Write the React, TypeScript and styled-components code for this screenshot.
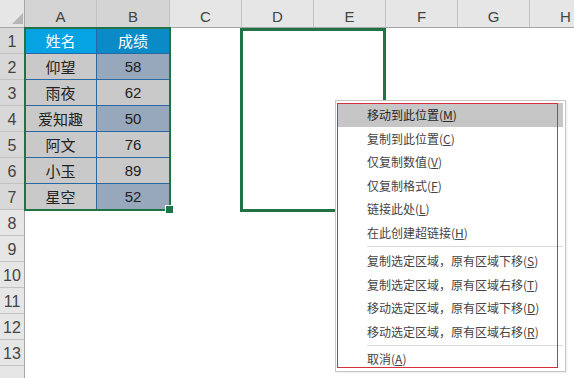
import React, { FC } from "react";
import styled, { createGlobalStyle, css } from "styled-components";

const GlobalStyle = createGlobalStyle`
  html, body {
    margin: 0;
    padding: 0;
    background: #ffffff;
  }
  body {
    font-family: "Liberation Sans", "Noto Sans CJK SC", sans-serif;
  }
`;

const COLS = ["A", "B", "C", "D", "E", "F", "G", "H"];
const ROWS = 14;
// only the top of row 14 is on screen, its number falls below the edge
const LABELED_ROWS = 13;

const Sheet = styled.div`
  position: relative;
  width: 574px;
  height: 378px;
  overflow: hidden;
  display: grid;
  grid-template-columns: 25px 72px 73px 72px 72px 72px 72px 72px 72px;
  grid-template-rows: 28px repeat(${ROWS}, 26px);
  background: #ffffff;
`;

const Corner = styled.div`
  background: #e6e6e6;
  border-right: 1px solid #a6a6a6;
  border-bottom: 1px solid #a6a6a6;
  box-sizing: border-box;
  display: flex;
  align-items: flex-end;
  justify-content: flex-end;
  padding: 0 1px 3px 0;
`;

const ColHeader = styled.div<{ $selected?: boolean }>`
  background: ${(p) => (p.$selected ? "#d4d4d4" : "#e6e6e6")};
  border-right: 1px solid #c2c2c2;
  border-bottom: 1px solid #a6a6a6;
  box-sizing: border-box;
  display: flex;
  align-items: flex-end;
  justify-content: center;
  padding-bottom: 2px;
  font-size: 15px;
  color: #444444;
`;

const RowHeader = styled.div<{ $selected?: boolean }>`
  background: ${(p) => (p.$selected ? "#d8d8d8" : "#e6e6e6")};
  border-right: 1px solid #a6a6a6;
  border-bottom: 1px solid #c2c2c2;
  box-sizing: border-box;
  display: flex;
  align-items: flex-end;
  justify-content: center;
  padding-bottom: 2px;
  font-size: 16px;
  color: #444444;
`;

type CellKind = "head1" | "head2" | "name" | "dark" | "light" | "empty";

const kindStyles: Record<CellKind, ReturnType<typeof css>> = {
  head1: css`
    background: #05a2e4;
    color: #ffffff;
  `,
  head2: css`
    background: #0a8bc7;
    color: #ffffff;
  `,
  name: css`
    background: #c9c9c9;
    color: #222222;
  `,
  dark: css`
    background: #97a8bc;
    color: #222222;
  `,
  light: css`
    background: #c9c9c9;
    color: #222222;
  `,
  empty: css`
    background: transparent;
  `,
};

const Cell = styled.div<{ $kind: CellKind }>`
  box-sizing: border-box;
  display: flex;
  align-items: center;
  justify-content: center;
  font-family: "Liberation Sans", "Noto Sans CJK SC", sans-serif;
  font-size: 15px;
  ${(p) => kindStyles[p.$kind]}
  ${(p) =>
    p.$kind !== "empty" &&
    css`
      border-right: 1px solid #2b67a3;
      border-bottom: 1px solid #2b67a3;
    `}
`;

const Selection = styled.div`
  position: absolute;
  left: 24px;
  top: 27px;
  width: 147px;
  height: 184px;
  border: 2px solid #217346;
  box-sizing: border-box;
  pointer-events: none;
`;

const FillHandle = styled.div`
  position: absolute;
  right: -5px;
  bottom: -5px;
  width: 7px;
  height: 7px;
  background: #217346;
  border: 1px solid #ffffff;
`;

const DragOutline = styled.div`
  position: absolute;
  left: 240px;
  top: 28px;
  width: 146px;
  height: 184px;
  border: 3px solid #217346;
  box-sizing: border-box;
`;

const Menu = styled.div`
  position: absolute;
  left: 335px;
  top: 100px;
  width: 231px;
  height: 272px;
  box-sizing: border-box;
  background: #ffffff;
  border: 1px solid #c6c6c6;
  padding: 2px 2px 1px 1px;
  box-shadow: 1px 1px 2px rgba(0, 0, 0, 0.08);
  font-family: "Noto Sans CJK SC", "Liberation Sans", sans-serif;
`;

const MenuItem = styled.div<{ $active?: boolean }>`
  height: 23.5px;
  display: flex;
  align-items: center;
  padding-left: 30px;
  font-size: 12px;
  color: ${(p) => (p.$active ? "#262626" : "#444444")};
  background: ${(p) => (p.$active ? "#c6c6c6" : "transparent")};
  white-space: nowrap;

  u {
    text-underline-offset: 1px;
  }
`;

const Separator = styled.div<{ $h: number }>`
  height: ${(p) => p.$h}px;
  display: flex;
  align-items: center;
  padding-left: 30px;

  &::after {
    content: "";
    flex: 1;
    height: 1px;
    background: #dadada;
  }
`;

const RedMark = styled.div`
  position: absolute;
  left: 1px;
  top: 2px;
  width: 221px;
  height: 265px;
  border: 1px solid #d5303b;
  box-sizing: border-box;
  pointer-events: none;
`;

const CornerTriangle: FC = () => (
  <svg width="11" height="11" viewBox="0 0 11 11">
    <polygon points="11,0 11,11 0,11" fill="#b6b6b6" />
  </svg>
);

const data: [string, string][] = [
  ["仰望", "58"],
  ["雨夜", "62"],
  ["爱知趣", "50"],
  ["阿文", "76"],
  ["小玉", "89"],
  ["星空", "52"],
];
const darkRows = new Set([0, 2, 5]);

type Item = { label: string; key: string } | { sep: number };

const items: Item[] = [
  { label: "移动到此位置", key: "M" },
  { label: "复制到此位置", key: "C" },
  { label: "仅复制数值", key: "V" },
  { label: "仅复制格式", key: "F" },
  { label: "链接此处", key: "L" },
  { label: "在此创建超链接", key: "H" },
  { sep: 5 },
  { label: "复制选定区域，原有区域下移", key: "S" },
  { label: "复制选定区域，原有区域右移", key: "T" },
  { label: "移动选定区域，原有区域下移", key: "D" },
  { label: "移动选定区域，原有区域右移", key: "R" },
  { sep: 4 },
  { label: "取消", key: "A" },
];

const App: FC = () => {
  const cellsFor = (row: number) => {
    let a: React.ReactNode = null;
    let b: React.ReactNode = null;
    let ka: CellKind = "empty";
    let kb: CellKind = "empty";
    if (row === 0) {
      a = "姓名";
      b = "成绩";
      ka = "head1";
      kb = "head2";
    } else if (row <= data.length) {
      a = data[row - 1][0];
      b = data[row - 1][1];
      ka = "name";
      kb = darkRows.has(row - 1) ? "dark" : "light";
    }
    return [
      <Cell key="a" $kind={ka}>{a}</Cell>,
      <Cell key="b" $kind={kb}>{b}</Cell>,
      ...COLS.slice(2).map((c) => <Cell key={c} $kind="empty" />),
    ];
  };

  return (
    <>
      <GlobalStyle />
      <Sheet>
        <Corner>
          <CornerTriangle />
        </Corner>
        {COLS.map((c, i) => (
          <ColHeader key={c} $selected={i < 2}>
            {c}
          </ColHeader>
        ))}
        {Array.from({ length: ROWS }, (_, r) => (
          <React.Fragment key={r}>
            <RowHeader $selected={r < 7}>{r < LABELED_ROWS ? r + 1 : null}</RowHeader>
            {cellsFor(r)}
          </React.Fragment>
        ))}

        <Selection>
          <FillHandle />
        </Selection>
        <DragOutline />

        <Menu>
          {items.map((it, i) =>
            "sep" in it ? (
              <Separator key={i} $h={it.sep} />
            ) : (
              <MenuItem key={i} $active={i === 0}>
                {it.label}(<u>{it.key}</u>)
              </MenuItem>
            )
          )}
          <RedMark />
        </Menu>
      </Sheet>
    </>
  );
};

export default App;
